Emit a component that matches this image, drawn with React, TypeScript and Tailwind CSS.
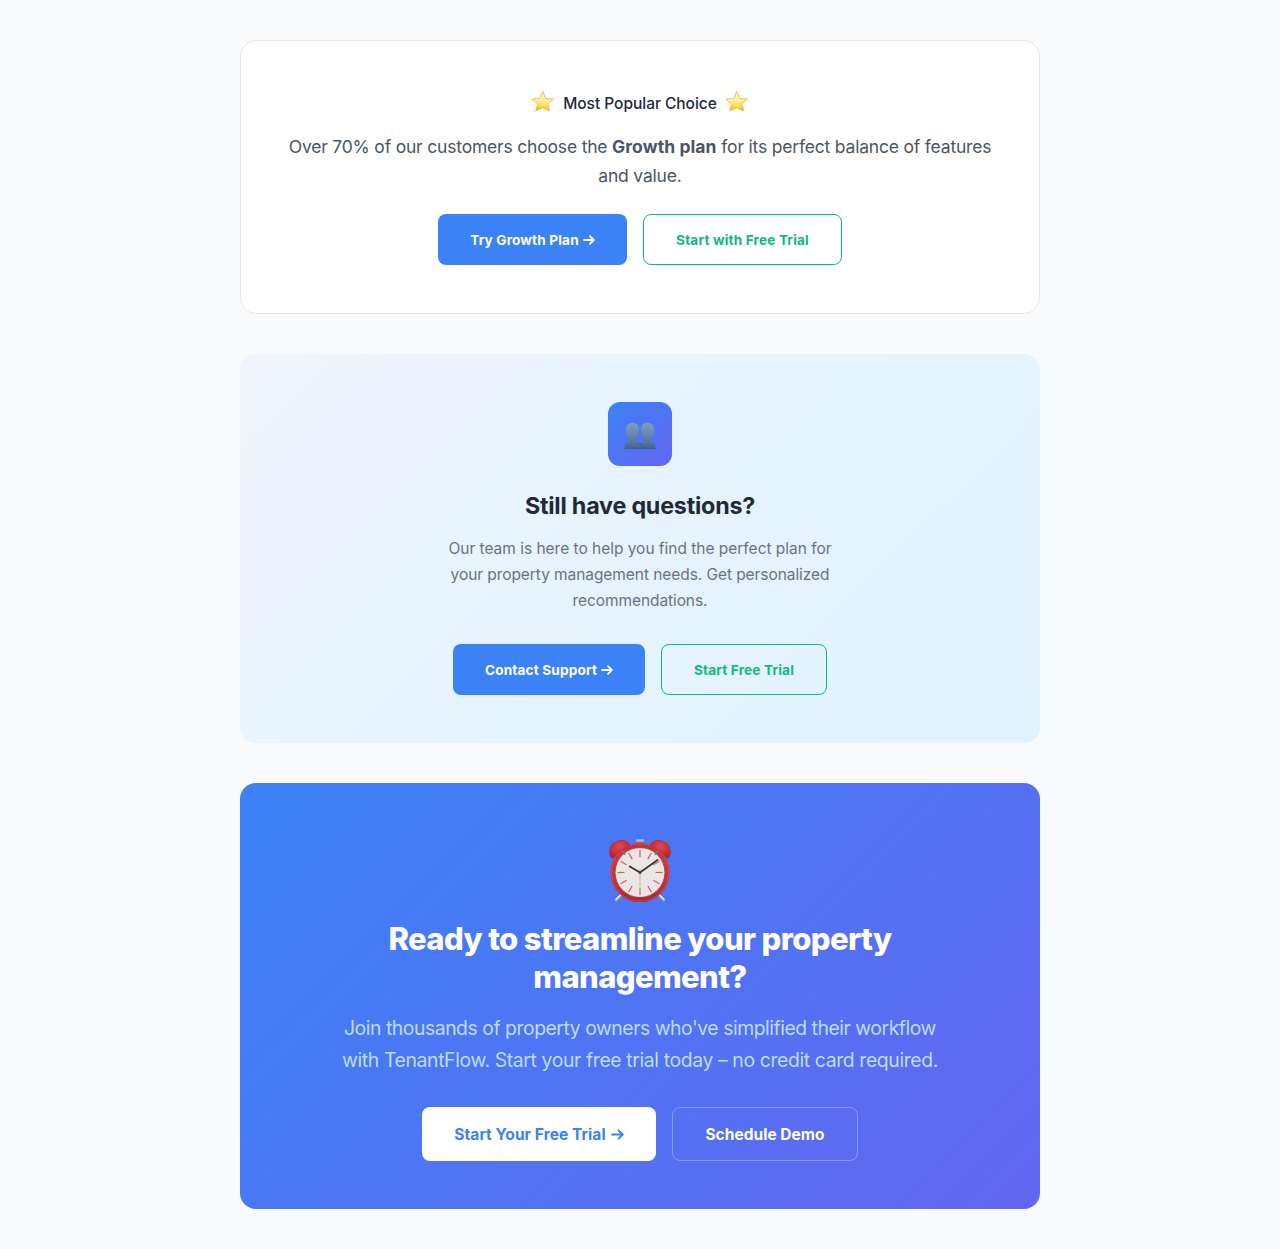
import React from 'react';

function Star() {
  return (
    <svg viewBox="0 0 24 24" className="h-6 w-6 -translate-x-[0.5px] -translate-y-px">
      <defs>
        <linearGradient id="star" x1="0" y1="0" x2="0" y2="1">
          <stop offset="0" stopColor="#ffe9a0" />
          <stop offset="0.45" stopColor="#fff3a8" />
          <stop offset="0.75" stopColor="#ffdc45" />
          <stop offset="1" stopColor="#fbae0f" />
        </linearGradient>
      </defs>
      <path
        d="M12.200 1.300 L15.300 8.500 L23 9 L17.200 14.100 L19.400 21 L12.200 17.800 L5 21 L7.200 14.100 L1.400 9 L9.100 8.500 Z"
        fill="url(#star)"
        stroke="#f4b654"
        strokeWidth="0.9"
        strokeLinejoin="round"
      />
    </svg>
  );
}

function People() {
  return (
    <svg viewBox="0 0 32 28" className="h-7 w-8 translate-y-[2px]">
      <defs>
        <linearGradient id="bust" x1="0" y1="0" x2="0" y2="1">
          <stop offset="0" stopColor="#7d9fc4" />
          <stop offset="1" stopColor="#45698c" />
        </linearGradient>
      </defs>
      <path
        d="M8.400 0.800 C12.400 0.800 15 4 15 8 C15 12 13.200 14.500 11.500 16.500 L11.500 18.500 C11.500 20.200 15.500 20.300 16 21.500 C16.500 20.300 20.500 20.200 20.500 18.500 L20.500 16.500 C18.800 14.500 17 12 17 8 C17 4 19.600 0.800 23.600 0.800 C27.600 0.800 30.200 4 30.200 8 C30.200 12 28.400 14.500 26.700 16.500 L26.700 18.500 C26.700 21 31.300 20.500 31.300 23.500 L31.300 26.700 L0.7 26.700 L0.7 23.500 C0.7 20.500 5.300 21 5.300 18.500 L5.300 16.500 C3.600 14.500 1.800 12 1.800 8 C1.800 4 4.400 0.800 8.400 0.800 Z"
        fill="url(#bust)"
      />
      <path d="M14 21 C17 22 19.5 22.5 20 26" fill="none" stroke="#365a79" strokeWidth="0.7" />
      <path d="M0.7 26.3 H31.3" stroke="#365a79" strokeWidth="0.8" />
    </svg>
  );
}

const ticks = [0, 30, 60, 90, 120, 150, 180, 210, 240, 270, 300, 330];

function AlarmClock() {
  return (
    <svg viewBox="0 0 64 64" className="h-16 w-16">
      <defs>
        <linearGradient id="rim" x1="0" y1="0" x2="0" y2="1">
          <stop offset="0" stopColor="#c93036" />
          <stop offset="0.5" stopColor="#cc363b" />
          <stop offset="1" stopColor="#b3252c" />
        </linearGradient>
        <radialGradient id="bell" cx="0.5" cy="0.35" r="0.7">
          <stop offset="0" stopColor="#e24852" />
          <stop offset="1" stopColor="#b3202b" />
        </radialGradient>
      </defs>
      <path d="M13.5 56 L8.500 61 M50.500 56 L55.500 61" stroke="#8e969c" strokeWidth="3.200" strokeLinecap="round" />
      <path d="M13 55.500 L8 60.500 M51 55.500 L56 60.500" stroke="#edf0f1" strokeWidth="1.500" strokeLinecap="round" />
      <path d="M32 1.500 V7.500" stroke="#777f87" strokeWidth="3" />
      <rect x="28" y="0.200" width="8" height="2.600" rx="1" fill="#aebbc8" />
      <circle cx="32" cy="33.500" r="27.300" fill="#e9e6e5" stroke="url(#rim)" strokeWidth="4.600" />
      <circle cx="32" cy="33.500" r="24.900" fill="none" stroke="#90242a" strokeWidth="0.700" />
      <circle cx="32" cy="33.500" r="28.600" fill="none" stroke="#e05a5e" strokeWidth="0.500" />
      <path d="M4 2.500 L7 5.500 M60 2.500 L57 5.500 M14 12 L16.500 15 M50 12 L47.500 15" stroke="#6b747c" strokeWidth="2" strokeLinecap="round" />
      <path d="M2.300 17 C-1.200 8 7.500 0 15.500 1.500 C19.500 2.300 22 5 21.500 7 C17 8 9 13.500 6 18.500 C4.700 19.700 3.200 19.200 2.300 17 Z" fill="url(#bell)" stroke="#9c1d27" strokeWidth="0.400" />
      <path d="M61.700 17 C65.200 8 56.500 0 48.500 1.500 C44.500 2.300 42 5 42.500 7 C47 8 55 13.500 58 18.500 C59.300 19.700 60.800 19.200 61.700 17 Z" fill="url(#bell)" stroke="#9c1d27" strokeWidth="0.400" />
      {ticks.map((a) => (
        <path key={a} d="M32 11 V18" stroke="#e0585c" strokeWidth="1.200" transform={`rotate(${a} 32 33.500)`} />
      ))}
      <path d="M32 30 V53" stroke="#d5b28b" strokeWidth="1" />
      <path d="M32 33.500 L21.800 27.500" stroke="#343537" strokeWidth="2" strokeLinecap="round" />
      <path d="M32 33.500 L49.500 21" stroke="#343537" strokeWidth="1.700" strokeLinecap="round" />
      <circle cx="32" cy="33.500" r="1.500" fill="#4b4742" />
    </svg>
  );
}

function Arrow({ className }: { className: string }) {
  return (
    <svg viewBox="0 0 12 12" className={className} fill="none" stroke="currentColor" strokeWidth="1.800" strokeLinecap="round" strokeLinejoin="round">
      <path d="M1 6 H10.700 M7 2.200 L10.800 6 L7 9.800" />
    </svg>
  );
}

const small = 'flex h-[51px] items-center justify-center rounded-lg text-[13.600px] font-bold tracking-[0.170px] whitespace-nowrap';

export default function App() {
  return (
    <main className="flex h-[1249px] flex-col items-center gap-10 bg-[#f9fafc] py-10 font-['Inter',sans-serif]">
      <section className="flex h-[274px] w-[800px] flex-col items-center rounded-2xl border border-gray-200 bg-white pt-[50px] text-center">
        <div className="flex h-6 items-center gap-2 text-[15.500px] font-medium text-gray-800">
          <Star />
          <span className="w-[154px] pt-[2px] whitespace-nowrap tracking-[-0.030px]">Most Popular Choice</span>
          <Star />
        </div>
        <p className="mt-[17px] text-[17.500px] leading-[29px] tracking-[-0.190px] whitespace-nowrap text-gray-600">
          Over 70% of our customers choose the <strong className="font-bold tracking-[0.090px]">Growth plan</strong> for its perfect balance of features
          <br />
          and value.
        </p>
        <div className="mt-6 flex gap-4">
          <button className={`${small} w-[189px] gap-1 bg-[#3b82f6] text-white`}>
            <span className="pt-[2px]">Try Growth Plan</span>
            <Arrow className="h-3 w-3" />
          </button>
          <button className={`${small} w-[199px] border border-[#10b981] text-[#10b981]`}>
            <span className="pt-[2px]">Start with Free Trial</span>
          </button>
        </div>
      </section>

      <section className="flex h-[389px] w-[800px] flex-col items-center rounded-2xl bg-[radial-gradient(circle_at_center,rgba(255,255,255,0.2)_0.500px,transparent_1.500px),linear-gradient(135deg,#f0f6ff_0%,#eef4ff_20%,#e8f4fe_32%,#e0f2fe_100%)] bg-[size:60px_60px,100%_100%] pt-12 text-center">
        <div className="flex h-16 w-16 items-center justify-center rounded-xl bg-[linear-gradient(135deg,#3b82f6,#6366f1)]">
          <People />
        </div>
        <h2 className="mt-6 text-[23.300px] leading-8 font-bold tracking-[-0.210px] text-gray-800">Still have questions?</h2>
        <p className="mt-[14px] text-[15.500px] leading-[26px] tracking-[-0.020px] whitespace-nowrap text-gray-500">
          Our team is here to help you find the perfect plan for
          <br />
          <span className="tracking-[-0.070px]">your property management needs. Get personalized</span>
          <br />
          <span className="tracking-[-0.090px]">recommendations.</span>
        </p>
        <div className="mt-[30px] flex gap-4">
          <button className={`${small} w-[192px] gap-1 bg-[#3b82f6] text-white`}>
            <span className="pt-[2px]">Contact Support</span>
            <Arrow className="h-3 w-3" />
          </button>
          <button className={`${small} w-[166px] border border-[#10b981] text-[#10b981]`}>
            <span className="pt-[2px]">Start Free Trial</span>
          </button>
        </div>
      </section>

      <section className="flex h-[426px] w-[800px] flex-col items-center rounded-2xl bg-[radial-gradient(circle_at_center,rgba(255,255,255,0.05)_0.500px,transparent_1.500px),linear-gradient(135deg,#3b82f6,#6366f1)] bg-[size:60px_60px,100%_100%] pt-[56px] text-center">
        <AlarmClock />
        <h2 className="mt-[17px] text-[31px] leading-[38px] font-extrabold tracking-[-0.620px] whitespace-nowrap text-white">
          Ready to streamline your property
          <br />
          management?
        </h2>
        <p className="mt-4 text-[19.400px] leading-8 whitespace-nowrap text-[#bfdbfe]">
          <span className="tracking-[-0.475px]">Join thousands of property owners who've simplified their workflow</span>
          <br />
          <span className="tracking-[-0.385px]">with TenantFlow. Start your free trial today – no credit card required.</span>
        </p>
        <div className="mt-[31px] flex gap-4">
          <button className="flex h-[54px] w-[234px] items-center justify-center gap-[5px] rounded-lg bg-white text-[15.500px] font-bold tracking-[0.080px] whitespace-nowrap text-[#3b82f6]">
            <span className="pt-[2px]">Start Your Free Trial</span>
            <Arrow className="h-[13px] w-[13px]" />
          </button>
          <button className="flex h-[54px] w-[186px] items-center justify-center rounded-lg border border-white/30 text-[15.500px] font-bold tracking-[0.030px] text-white">
            <span className="pt-[2px]">Schedule Demo</span>
          </button>
        </div>
      </section>
    </main>
  );
}
